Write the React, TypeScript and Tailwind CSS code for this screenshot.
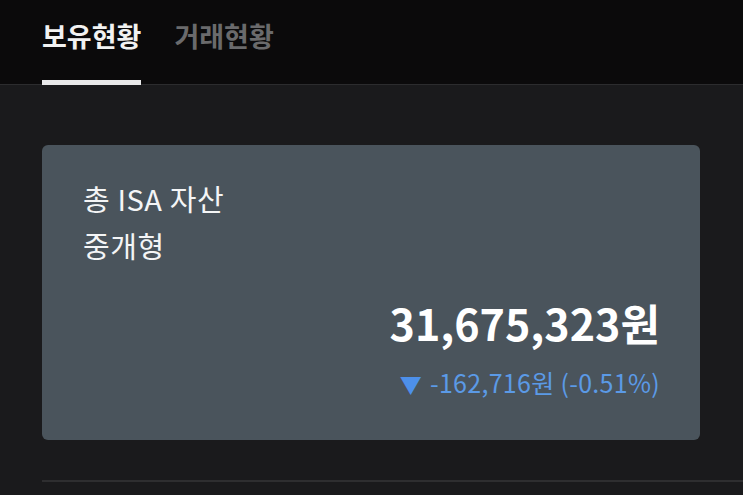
export default function App() {
  const font = { fontFamily: '"Noto Sans CJK KR", "Noto Sans", sans-serif' };

  return (
    <main className="min-h-screen w-[743px] h-[495px] overflow-hidden bg-[#1a1a1c] text-white" style={font}>
      {/* Tabs */}
      <div className="bg-[#0b0a0b] border-b border-[#2c2c2e]">
        <div className="flex gap-[33px] pl-[42px] h-[84px]">
          <div className="relative flex flex-col">
            <span className="pt-[16px] text-[27px] font-bold leading-[40px] text-[#f2f2f2]">보유현황</span>
            <span className="absolute left-0 right-0 bottom-[-1px] h-[5px] bg-[#e9e9ea]" />
          </div>
          <span className="pt-[16px] text-[27px] font-bold leading-[40px] text-[#6a6a6c]">거래현황</span>
        </div>
      </div>

      {/* Card */}
      <div className="pl-[42px] pr-[43px] pt-[60px]">
        <div className="h-[295px] rounded-[6px] bg-[#4a545c] pl-[41px] pr-[40px] pt-[30px] flex flex-col">
          <div className="text-[29px] leading-[47px] tracking-[0.6px] text-[#f4f5f6]">
            <p>총 ISA 자산</p>
            <p>중개형</p>
          </div>
          <p className="mt-[27px] text-right text-[43px] font-bold leading-[52px] text-white">31,675,323원</p>
          <p className="mt-[19px] text-right text-[25px] leading-[30px] tracking-[0.3px] text-[#5b9ae6]">
            <span className="text-[22px] text-[#4d90ea] mr-[8px]">▼</span>-162,716원 (-0.51%)
          </p>
        </div>
      </div>

      {/* Divider */}
      <div className="ml-[42px] mt-[40px] h-[2px] bg-[#2e2e30]" />
    </main>
  );
}
